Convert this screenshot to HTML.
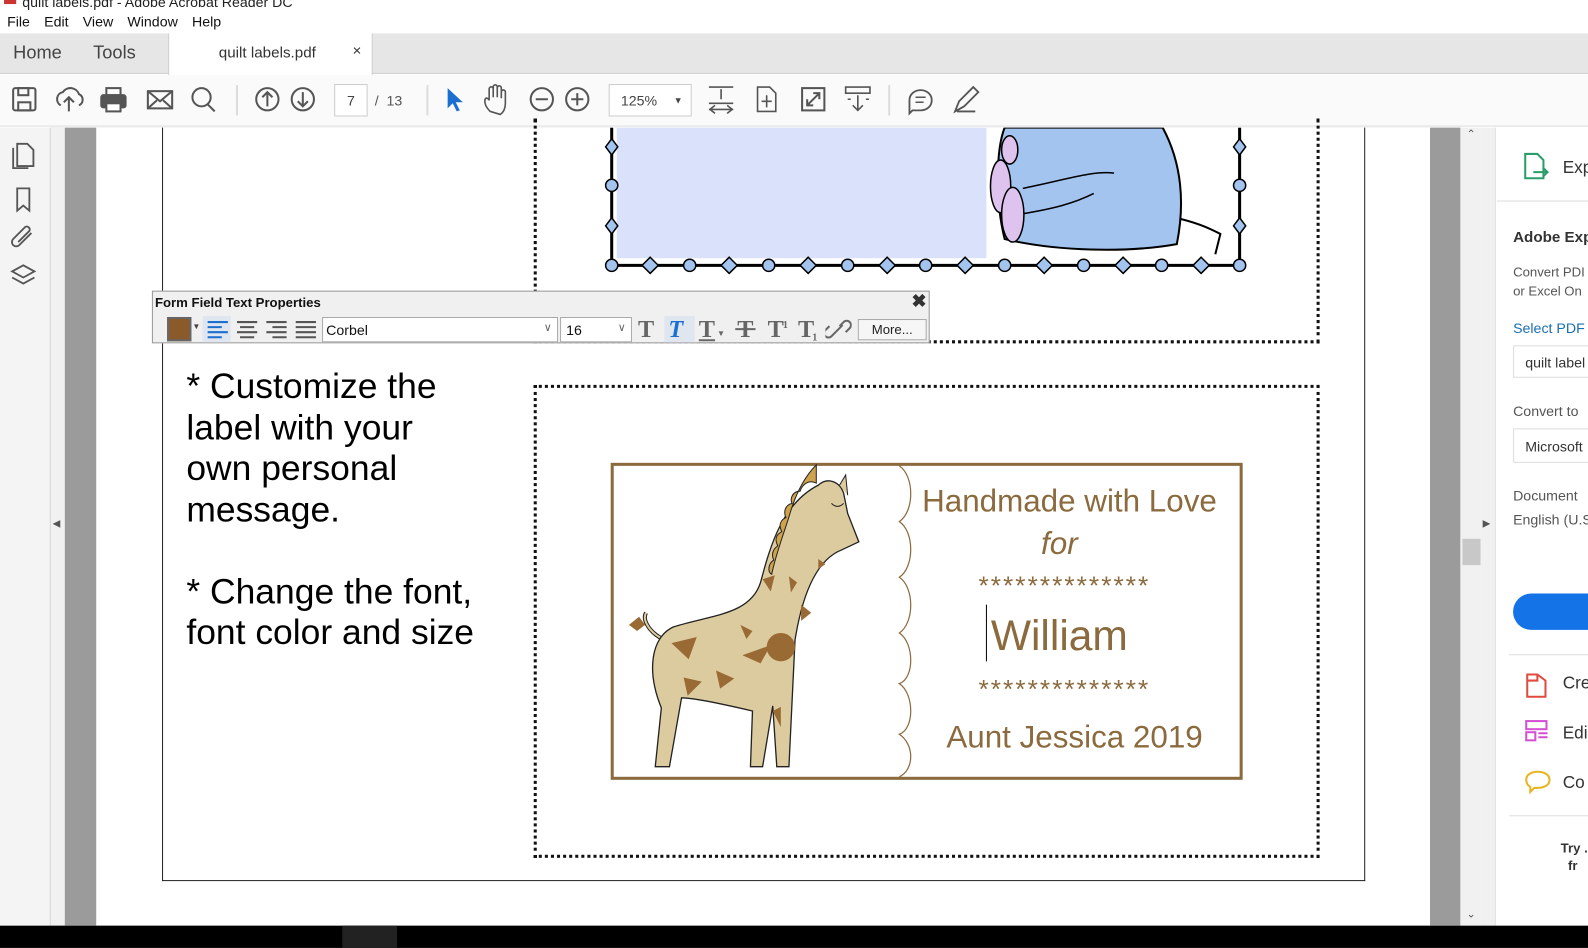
<!DOCTYPE html>
<html><head><meta charset="utf-8"><style>
*{box-sizing:border-box;margin:0;padding:0}
body{width:1588px;height:936px;overflow:hidden;background:#fff;font-family:"Liberation Sans",sans-serif;position:relative}
#w{position:absolute;left:0;top:0;width:1568px;height:925px;transform:scale(1.01276);transform-origin:0 0}
.a{position:absolute;white-space:nowrap}
.menu span{margin-right:14px}
</style></head><body><div id="w">
<div class="a" style="top:-6px;left:22px;font-size:14px;color:#222">quilt labels.pdf - Adobe Acrobat Reader DC</div>
<div class="a" style="top:0;left:4px;width:12px;height:4px;background:#c33"></div>
<div class="a menu" style="top:13px;left:7px;font-size:14px;color:#111"><span>File</span><span>Edit</span><span>View</span><span>Window</span><span>Help</span></div>
<div class="a" style="top:33px;left:0;width:1568px;height:40px;background:#e6e6e6;border-bottom:1px solid #d0d0d0"></div>
<div class="a" style="top:42px;left:13px;font-size:18px;color:#444">Home</div>
<div class="a" style="top:42px;left:92px;font-size:18px;color:#444">Tools</div>
<div class="a" style="top:33px;left:166px;width:202px;height:41px;background:#fff;border-left:1px solid #ccc;border-right:1px solid #ccc"></div>
<div class="a" style="top:44px;left:216px;font-size:15px;color:#333">quilt labels.pdf</div>
<div class="a" style="top:42px;left:348px;font-size:15px;color:#333">×</div>
<div class="a" style="top:74px;left:0;width:1568px;height:51px;background:#fafafa;border-bottom:1px solid #ddd"></div>
<svg class="a" style="top:74px;left:0" width="1000" height="50" fill="none" stroke="#555" stroke-width="2">
<rect x="13" y="13" width="22" height="22" rx="2"/><rect x="18" y="13" width="10" height="7"/><rect x="18" y="27" width="12" height="8"/>
<path d="M60 30a7 7 0 0 1 2-13 9 9 0 0 1 16 2 6 6 0 0 1 0 11M68 36V22m-5 5 5-5 5 5"/>
<rect x="100" y="20" width="24" height="12" rx="2" fill="#555"/><rect x="105" y="13" width="14" height="7"/><rect x="105" y="28" width="14" height="8" fill="#fff"/>
<rect x="146" y="16" width="24" height="17"/><path d="M146 16l12 10 12-10M146 33l9-8M170 33l-9-8"/>
<circle cx="199" cy="22" r="9"/><path d="M205 29l7 7"/>
<path d="M234 10v30" stroke="#ddd"/>
<circle cx="264" cy="24" r="11"/><path d="M264 31V17m-5 5 5-5 5 5"/>
<circle cx="299" cy="24" r="11"/><path d="M299 17v14m-5-5 5 5 5-5"/>
<path d="M422 10v30" stroke="#ddd"/>
<path d="M442 13v20l5-5 4 8 3-1-4-8h7z" fill="#1a6fd0" stroke="none"/>
<path d="M484 36c-4-4-6-8-5-12 1-2 3-1 4 1V14c0-3 4-3 4 0v8-10c0-3 4-3 4 0v10-9c0-3 4-3 4 0v10-6c0-3 4-3 4 0v11c0 5-2 9-5 11z" stroke-width="1.6"/>
<circle cx="535" cy="24" r="11"/><path d="M529 24h12"/>
<circle cx="570" cy="24" r="11"/><path d="M564 24h12M570 18v12"/>
<path d="M878 10v30" stroke="#ddd"/>
<path d="M700 12h24M712 14v10m-12 4h24M700 34h24M706 30l-5 4 5 4M718 30l5 4-5 4" stroke-width="1.6"/>
<path d="M748 12h12l6 6v18h-18z" stroke-width="1.6"/><path d="M757 20v12m-5-6h10" stroke-width="1.6"/>
<rect x="792" y="13" width="22" height="22"/><path d="M797 30l12-12m-6 0h6v6m-6 6h-6v-6"/>
<path d="M835 12h24v6h-24zM847 20v14m-5-4 5 5 5-5M840 24h-3M855 24h3" stroke-width="1.6"/>
<path d="M898 25c0-6 5-10 11-10s11 4 11 10-5 10-11 10h-8l-3 3v-5c-0-1 0-2 0-8z" stroke-width="1.8"/><path d="M904 22h10M904 27h8" stroke-width="1.5"/>
<path d="M943 36l4-10 14-14 5 5-14 14z M945 36h18" stroke-width="1.8"/>
</svg>
<div class="a" style="top:83px;left:330px;width:33px;height:32px;border:1px solid #ccc;background:#fff;font-size:14px;text-align:center;line-height:30px;color:#444">7</div>
<div class="a" style="top:91px;left:370px;font-size:14px;color:#555">/&nbsp; 13</div>
<div class="a" style="top:83px;left:601px;width:82px;height:32px;border:1px solid #ccc;background:#fff;font-size:14px;line-height:30px;padding-left:11px;color:#444">125%<span style="position:absolute;right:8px;top:0;font-size:9px">▼</span></div>
<div class="a" style="top:126px;left:0;width:50px;height:788px;background:#f4f4f4;border-right:1px solid #ddd"></div>
<svg class="a" style="top:126px;left:0" width="50" height="170" fill="none" stroke="#555" stroke-width="1.8">
<path d="M17 16h10l6 6v16H17z M13 20v20h15"/><path d="M17 60v22l6-5 6 5V60z"/><path d="M31 104l-12 12a4 4 0 0 1-6-6l12-12a3 3 0 0 1 4 4l-11 11"/><path d="M23 136l11 6-11 6-11-6zM12 148l11 6 11-6"/>
</svg>
<div class="a" style="top:126px;left:50px;width:1392px;height:788px;background:#9b9b9b"></div>
<div class="a" style="top:126px;left:50px;width:14px;height:788px;background:#f1f1f1"></div>
<div class="a" style="top:512px;left:52px;font-size:10px;color:#555">◀</div>
<div class="a" style="top:126px;left:95px;width:1317px;height:788px;background:#fff"></div>
<div class="a" style="top:126px;left:160px;width:1188px;height:744px;border:1px solid #222;border-top:none"></div>
<div class="a" style="top:126px;left:1442px;width:20px;height:788px;background:#f1f1f1"></div>
<div class="a" style="top:532px;left:1444px;width:18px;height:26px;background:#c8c8c8"></div>
<div class="a" style="top:126px;left:1448px;font-size:11px;color:#555">⌃</div>
<div class="a" style="top:896px;left:1448px;font-size:11px;color:#555">⌄</div>
<div class="a" style="top:126px;left:1462px;width:15px;height:788px;background:#f1f1f1;border-right:1px solid #ddd"></div>
<div class="a" style="top:512px;left:1464px;font-size:10px;color:#555">▶</div>
<div class="a" style="top:126px;left:1477px;width:111px;height:788px;background:#fff"></div>
<svg class="a" style="top:150px;left:1504px" width="28" height="30" fill="none" stroke="#2a9d6a" stroke-width="2"><path d="M2 2h12l6 6v18H2z"/><path d="M10 20h14m-4-4 4 4-4 4"/></svg>
<div class="a" style="top:156px;left:1543px;font-size:17px;color:#333">Exp</div>
<div class="a" style="top:198px;left:1478px;width:110px;height:1px;background:#ddd"></div>
<div class="a" style="top:226px;left:1494px;font-size:15px;font-weight:bold;color:#333">Adobe Exp</div>
<div class="a" style="top:259px;left:1494px;font-size:13px;color:#555;line-height:19px">Convert PDI<br>or Excel On</div>
<div class="a" style="top:316px;left:1494px;font-size:14px;color:#1a6fb0">Select PDF</div>
<div class="a" style="top:341px;left:1494px;width:100px;height:32px;border:1px solid #ddd;font-size:14px;color:#333;padding:8px 11px">quilt label</div>
<div class="a" style="top:398px;left:1494px;font-size:14px;color:#555">Convert to</div>
<div class="a" style="top:423px;left:1494px;width:100px;height:34px;border:1px solid #ddd;font-size:14px;color:#333;padding:9px 11px">Microsoft</div>
<div class="a" style="top:477px;left:1494px;font-size:14px;color:#555;line-height:24px">Document<br>English (U.S</div>
<div class="a" style="top:586px;left:1494px;width:110px;height:36px;border-radius:18px;background:#1473e6"></div>
<div class="a" style="top:646px;left:1490px;width:98px;height:1px;background:#ddd"></div>
<svg class="a" style="top:660px;left:1504px" width="28" height="130" fill="none" stroke-width="2"><path d="M4 6h10l8 6v16H4z M4 12h10V6" stroke="#e04a3f"/><rect x="3" y="52" width="20" height="8" stroke="#d34fd3"/><rect x="3" y="63" width="9" height="8" stroke="#d34fd3"/><path d="M15 64h9M15 68h9" stroke="#d34fd3"/><path d="M14 102c7 0 12 3 12 8s-5 8-12 8h-3l-4 4v-5c-3-2-4-4-4-7 0-5 5-8 11-8z" stroke="#e8b520"/></svg>
<div class="a" style="top:665px;left:1543px;font-size:17px;color:#333">Cre</div>
<div class="a" style="top:714px;left:1543px;font-size:17px;color:#333">Edi</div>
<div class="a" style="top:763px;left:1543px;font-size:17px;color:#333">Co</div>
<div class="a" style="top:805px;left:1490px;width:98px;height:1px;background:#ddd"></div>
<div class="a" style="top:829px;left:1541px;font-size:13px;font-weight:bold;color:#333;line-height:17px">Try .<br>&nbsp;&nbsp;fr</div>
<div class="a" style="top:914px;left:0;width:1588px;height:22px;background:#000"></div>
<div class="a" style="top:914px;left:338px;width:54px;height:22px;background:#222"></div>
<div class="a" style="top:117px;left:527px;width:776px;height:222px;border:3px dotted #111;border-top:none"></div>
<div class="a" style="top:380px;left:527px;width:776px;height:467px;border:3px dotted #111"></div>
<svg class="a" style="top:126px;left:590px" width="660" height="150">
<rect x="19" y="0" width="365" height="129" fill="#dae2fb"/>
<path d="M14 0V136H634V0" fill="none" stroke="#000" stroke-width="3"/>
<path d="M402 0c-8 20-10 70 0 110 50 12 120 14 170 5 8-40 5-80-14-115z" fill="#a3c4ef" stroke="#000" stroke-width="2"/>
<path d="M575 90c20 5 30 10 40 15l-5 20" stroke="#000" stroke-width="2" fill="none"/>
<path d="M420 60c40-8 70-18 90-15M420 85c30-5 50-10 70-20" stroke="#000" stroke-width="1.5" fill="none"/>
<ellipse cx="398" cy="58" rx="10" ry="26" fill="#dfc3ef" stroke="#000" stroke-width="1.5"/>
<ellipse cx="410" cy="86" rx="11" ry="27" fill="#dfc3ef" stroke="#000" stroke-width="1.5"/>
<ellipse cx="407" cy="22" rx="8" ry="14" fill="#dfc3ef" stroke="#000" stroke-width="1.5"/>
<g fill="#a3c4ef" stroke="#000" stroke-width="1.5">
<path d="M14 11l6 8-6 8-6-8z"/><circle cx="14" cy="57" r="6"/><path d="M14 89l6 8-6 8-6-8z"/>
<path d="M634 11l6 8-6 8-6-8z"/><circle cx="634" cy="57" r="6"/><path d="M634 89l6 8-6 8-6-8z"/>
<circle cx="14" cy="136" r="6"/><path d="M52 128l8 8-8 8-8-8z"/><circle cx="91" cy="136" r="6"/><path d="M130 128l8 8-8 8-8-8z"/><circle cx="169" cy="136" r="6"/><path d="M208 128l8 8-8 8-8-8z"/><circle cx="247" cy="136" r="6"/><path d="M286 128l8 8-8 8-8-8z"/><circle cx="324" cy="136" r="6"/><path d="M363 128l8 8-8 8-8-8z"/><circle cx="402" cy="136" r="6"/><path d="M441 128l8 8-8 8-8-8z"/><circle cx="480" cy="136" r="6"/><path d="M519 128l8 8-8 8-8-8z"/><circle cx="557" cy="136" r="6"/><path d="M596 128l8 8-8 8-8-8z"/><circle cx="634" cy="136" r="6"/>
</g></svg>
<div class="a" style="top:362px;left:184px;font-size:35px;line-height:40.5px;color:#000">* Customize the<br>label with your<br>own personal<br>message.<br><br>* Change the font,<br>font color and size</div>
<div class="a" style="top:457px;left:603px;width:624px;height:313px;border:3px solid #8b6a3e;background:#fff"></div>
<svg class="a" style="top:457px;left:603px" width="624" height="313">
<path d="M285 3c15 10 15 45 0 55 15 10 15 45 0 55 15 10 15 45 0 55 15 10 15 45 0 50 15 10 15 45 0 50 15 10 15 35 0 42" fill="none" stroke="#8b6a3e" stroke-width="1.2"/>
<path d="M35 148c-4 6 2 16 10 22 8 6 15 8 22 8" fill="none" stroke="#222" stroke-width="4"/>
<path d="M35 148c-4 6 2 16 10 22 8 6 15 8 22 8" fill="none" stroke="#ddcba0" stroke-width="2"/>
<path d="M18 160l10-8 6 8-8 6z" fill="#9a6a34"/>
<path d="M205 22C214 14 226 18 230 30L234 50L245 78L228 86C205 95 190 125 182 175L176 300L164 300L160 240L150 300L138 300L140 245C110 238 80 232 70 232L58 300L44 300L50 242C35 205 40 172 62 162C100 150 138 150 148 118C158 80 170 40 205 22Z" fill="#ddcba0" stroke="#222" stroke-width="1.3"/>
<path d="M203 20c-8-4-14 2-16 8-8 0-10 8-8 12-8 2-8 10-6 14-8 4-6 10-4 14-8 4-6 10-4 14-6 4-6 10-4 14-6 4-6 12-2 14 4-20 12-40 18-60 6-20 14-36 26-48z" fill="#cfa24c" stroke="#222" stroke-width="1"/>
<path d="M226 22l6-10 2 20" stroke="#222" fill="#ddcba0"/>
<path d="M218 40q6 6 12 0" stroke="#222" fill="none"/>
<g fill="#9a6a34"><circle cx="168" cy="182" r="14"/><path d="M130 190l28-10-10 18zM104 205l18 8-14 10zM188 140l10 8-10 8zM150 115l12-4-4 16zM60 178l25-6-8 22zM72 212l18 4-14 14zM160 245l8-4 0 20zM205 95l7 5-7 5zM176 112l8 6-6 10zM128 160l12 6-6 8z"/></g>
<text x="453" y="48" font-family="Liberation Sans,sans-serif" font-size="31" fill="#8b6a3e" text-anchor="middle">Handmade with Love</text>
<text x="443" y="90" font-family="Liberation Sans,sans-serif" font-style="italic" font-size="31" fill="#8b6a3e" text-anchor="middle">for</text>
<text x="448" y="130" font-family="Liberation Sans,sans-serif" font-size="26" fill="#8b6a3e" text-anchor="middle" letter-spacing="2">**************</text>
<text x="443" y="185" font-family="Liberation Sans,sans-serif" font-size="42" fill="#8b6a3e" text-anchor="middle">William</text>
<line x1="371" y1="140" x2="371" y2="196" stroke="#000"/>
<text x="448" y="232" font-family="Liberation Sans,sans-serif" font-size="26" fill="#8b6a3e" text-anchor="middle" letter-spacing="2">**************</text>
<text x="458" y="281" font-family="Liberation Sans,sans-serif" font-size="31" fill="#8b6a3e" text-anchor="middle">Aunt Jessica 2019</text>
</svg>
<div class="a" style="top:287px;left:150px;width:768px;height:52px;background:#f0f0f0;border:1px solid #999"></div>
<div class="a" style="top:291px;left:153px;font-size:13px;font-weight:bold;color:#111">Form Field Text Properties</div>
<div class="a" style="top:287px;left:900px;font-size:18px;font-weight:bold;color:#333">✖</div>
<div class="a" style="top:313px;left:165px;width:24px;height:24px;background:#8b5a2b;border:2px solid #666"></div>
<div class="a" style="top:318px;left:190px;font-size:8px;color:#444">▼</div>
<div class="a" style="top:312px;left:200px;width:28px;height:26px;background:#dfe6ef"></div>
<svg class="a" style="top:314px;left:202px" width="115" height="22" stroke-width="2"><g stroke="#1a6fd0"><path d="M3 4h20M3 9h14M3 14h20M3 19h14"/></g><g stroke="#555"><path d="M32 4h20M35 9h14M32 14h20M35 19h14M61 4h20M67 9h14M61 14h20M67 19h14M90 4h20M90 9h20M90 14h20M90 19h20"/></g></svg>
<div class="a" style="top:313px;left:318px;width:233px;height:25px;background:#fff;border:1px solid #aaa;font-size:14px;padding:4px 3px;color:#111">Corbel<span style="position:absolute;right:5px;top:3px;font-size:11px;color:#666">∨</span></div>
<div class="a" style="top:313px;left:553px;width:71px;height:25px;background:#fff;border:1px solid #aaa;font-size:14px;padding:4px 5px;color:#111">16<span style="position:absolute;right:5px;top:3px;font-size:11px;color:#666">∨</span></div>
<div class="a" style="top:312px;left:656px;width:30px;height:26px;background:#dfe6ef"></div>
<svg class="a" style="top:312px;left:626px" width="190" height="26" font-family="Liberation Serif,serif" font-size="24" font-weight="bold" fill="#666">
<text x="4" y="21">T</text><text x="34" y="21" fill="#1a6fd0" font-style="italic">T</text><text x="64" y="21">T</text><path d="M64 24h16" stroke="#666" stroke-width="2"/><text x="82" y="20" font-size="8">▼</text>
<text x="102" y="21">T</text><path d="M100 13h20" stroke="#666" stroke-width="2"/>
<text x="132" y="21">T</text><text x="147" y="12" font-size="10">1</text>
<text x="162" y="21">T</text><text x="176" y="24" font-size="10">1</text></svg>
<svg class="a" style="top:312px;left:815px" width="26" height="26" fill="none" stroke="#666" stroke-width="2"><path d="M10 16l-4 4a4 4 0 0 1-6-6l4-4M14 10l4-4a4 4 0 0 1 6 6l-4 4M9 17l8-8"/></svg>
<div class="a" style="top:315px;left:847px;width:68px;height:21px;border:1px solid #aaa;background:#f6f6f6;font-size:13px;text-align:center;line-height:19px;color:#222">More...</div>
</div></body></html>
